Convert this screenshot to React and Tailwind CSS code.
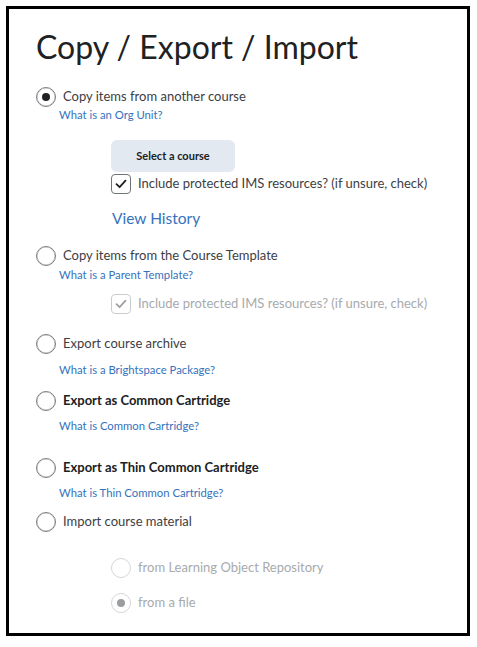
import React from 'react';

const Radio = ({ checked = false, disabled = false }) => (
    <span
        className={`flex h-5 w-5 shrink-0 items-center justify-center rounded-full border bg-white ${
            disabled ? 'border-[#d3d6d8]' : 'border-[#7c8185] shadow-[inset_0_0_0_0.5px_#b5b9bc]'
        }`}
    >
        {checked && (
            <span className={`h-[8px] w-[8px] rounded-full ${disabled ? 'bg-[#9a9ea1]' : 'bg-[#202122]'}`} />
        )}
    </span>
);

const Checkbox = ({ disabled = false }) => (
    <span
        className={`flex h-5 w-5 shrink-0 items-center justify-center rounded-[4px] border bg-white ${
            disabled ? 'border-[#c9ccce]' : 'border-[#6e7376]'
        }`}
    >
        <svg width="12" height="10" viewBox="0 0 12 10" fill="none">
            <path
                d="M1.5 5.2 L4.6 8.2 L10.5 1.6"
                stroke={disabled ? '#9ea2a5' : '#202122'}
                strokeWidth="1.8"
                strokeLinecap="round"
                strokeLinejoin="round"
            />
        </svg>
    </span>
);

const Option = ({ label, bold = false, checked = false, className = '' }) => (
    <div className={`flex h-5 items-center gap-[7px] ${className}`}>
        <Radio checked={checked} />
        <span className={`text-[13px] ${bold ? 'font-bold text-[#202122]' : 'text-[#3d4043]'}`}>{label}</span>
    </div>
);

const HelpLink = ({ children, className = '' }) => (
    <a className={`block h-[14px] pl-[23px] text-[11.3px] leading-[14px] text-[#3572bd] ${className}`}>{children}</a>
);

const App = () => {
    return (
        <div className="min-h-screen bg-white pt-[6px] pl-[6px] font-['Lato','Liberation_Sans',sans-serif]">
            <div className="flex h-[630px] w-[464px] flex-col border-[3px] border-black pl-[27px]">
                <h1 className="mt-[19px] text-[32px] leading-[38px] font-normal text-[#202122]">
                    Copy / Export / Import
                </h1>

                <Option label="Copy items from another course" checked className="mt-[21px]" />
                <HelpLink className="mt-[1px]">What is an Org Unit?</HelpLink>

                <div className="ml-[75px] flex flex-col">
                    <button className="mt-[18px] h-8 w-[124px] rounded-md bg-[#e3e9f1] text-[11px] font-bold text-[#202122]">
                        Select a course
                    </button>
                    <label className="mt-[2px] flex h-5 items-center gap-[7px]">
                        <Checkbox />
                        <span className="text-[13px] text-[#3d4043]">Include protected IMS resources? (if unsure, check)</span>
                    </label>
                    <a className="mt-[14px] h-5 pl-[1px] text-[15.5px] leading-5 text-[#3572bd]">View History</a>
                </div>

                <Option label="Copy items from the Course Template" className="mt-[18px]" />
                <HelpLink className="mt-[2px]">What is a Parent Template?</HelpLink>
                <label className="mt-[12px] ml-[75px] flex h-5 items-center gap-[7px]">
                    <Checkbox disabled />
                    <span className="text-[13px] text-[#a7aaad]">Include protected IMS resources? (if unsure, check)</span>
                </label>

                <Option label="Export course archive" className="mt-[20px]" />
                <HelpLink className="mt-[9px]">What is a Brightspace Package?</HelpLink>

                <Option label="Export as Common Cartridge" bold className="mt-[14px]" />
                <HelpLink className="mt-[8px]">What is Common Cartridge?</HelpLink>

                <Option label="Export as Thin Common Cartridge" bold className="mt-[25px]" />
                <HelpLink className="mt-[8px]">What is Thin Common Cartridge?</HelpLink>

                <Option label="Import course material" className="mt-[12px]" />

                <div className="ml-[75px] flex flex-col">
                    <div className="mt-[26px] flex h-5 items-center gap-[7px]">
                        <Radio disabled />
                        <span className="text-[13px] text-[#a7aaad]">from Learning Object Repository</span>
                    </div>
                    <div className="mt-[15px] flex h-5 items-center gap-[7px]">
                        <Radio checked disabled />
                        <span className="text-[13px] text-[#a7aaad]">from a file</span>
                    </div>
                </div>
            </div>
        </div>
    );
};

export default App;
